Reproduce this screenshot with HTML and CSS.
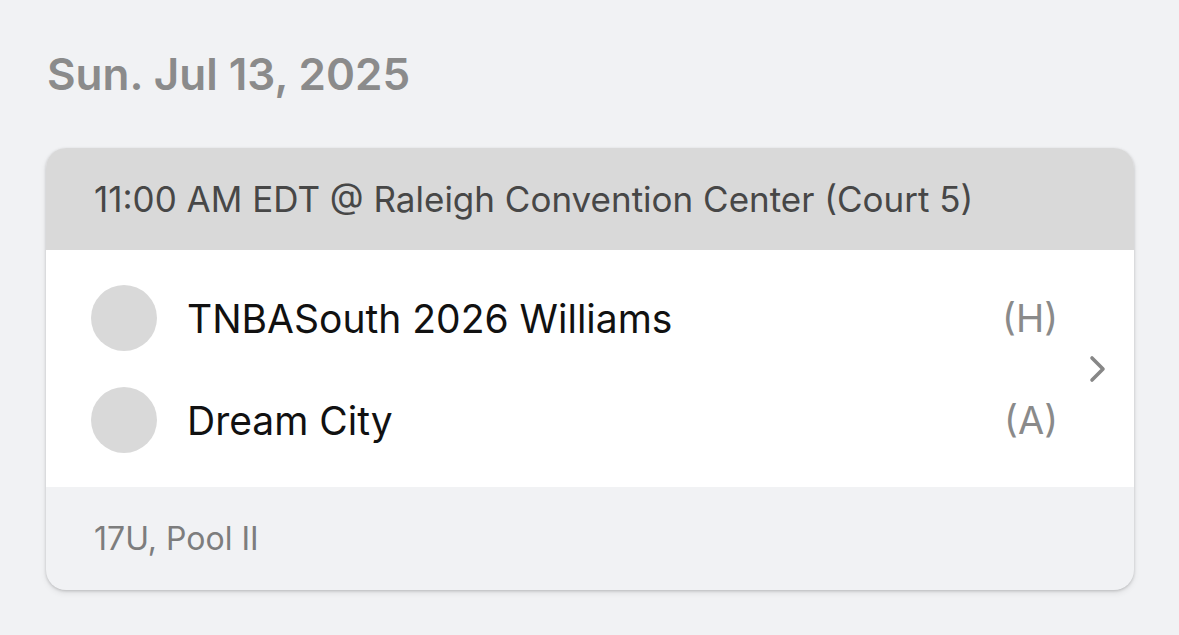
FILE: index.html
```html
<!DOCTYPE html>
<html>
<head>
<meta charset="utf-8">
<link rel="stylesheet" href="styles.css">
</head>
<body>
<main class="page">
  <h1 class="date">Sun. Jul 13, 2025</h1>
  <section class="card">
    <header class="card-head">11:00 AM EDT @ Raleigh Convention Center (Court 5)</header>
    <div class="card-body">
      <div class="teams">
        <div class="team">
          <span class="avatar"></span>
          <span class="name">TNBASouth 2026 Williams</span>
          <span class="side">(H)</span>
        </div>
        <div class="team">
          <span class="avatar"></span>
          <span class="name">Dream City</span>
          <span class="side">(A)</span>
        </div>
      </div>
      <svg class="chevron" width="20" height="28" viewBox="0 0 20 28" aria-hidden="true">
        <path d="M4 3 L15 14 L4 25" fill="none" stroke="#878787" stroke-width="3.6" stroke-linecap="round" stroke-linejoin="round"/>
      </svg>
    </div>
    <footer class="card-foot">17U, Pool II</footer>
  </section>
</main>
</body>
</html>
```
FILE: styles.css
```css
html, body {
  margin: 0;
  padding: 0;
  background: #f1f2f4;
}
body {
  font-family: Inter, "Noto Sans", "Liberation Sans", sans-serif;
  width: 1179px;
  height: 635px;
  overflow: hidden;
}
.page {
  padding: 46px 45px 0 46px;
}
.date {
  margin: 0 0 0 1px;
  font-size: 44px;
  line-height: 56px;
  font-weight: 600;
  color: #8b8b8b;
  letter-spacing: 0;
}
.card {
  margin-top: 46px;
  border-radius: 20px;
  overflow: hidden;
  background: #f1f2f4;
  box-shadow: 0 1px 3px rgba(0,0,0,0.18), 0 3px 6px rgba(0,0,0,0.08);
}
.card-head {
  height: 102px;
  background: #d9d9d9;
  display: flex;
  align-items: center;
  padding-left: 48px;
  font-size: 35px;
  color: #474747;
}
.card-body {
  background: #fff;
  display: flex;
  align-items: center;
  padding: 17px 26px 16px 45px;
  gap: 30px;
}
.teams {
  flex: 1;
  display: flex;
  flex-direction: column;
}
.team {
  height: 102px;
  display: flex;
  align-items: center;
}
.avatar {
  width: 66px;
  height: 66px;
  border-radius: 50%;
  background: #d9d9d9;
  flex: none;
}
.name {
  flex: 1;
  margin-left: 30px;
  font-size: 39px;
  color: #111;
  letter-spacing: 0;
}
.side {
  font-size: 38px;
  color: #8a8a8a;
}
.chevron {
  flex: none;
}
.card-foot {
  height: 103px;
  display: flex;
  align-items: center;
  padding-left: 48px;
  font-size: 32px;
  color: #7d7d7d;
}
```
